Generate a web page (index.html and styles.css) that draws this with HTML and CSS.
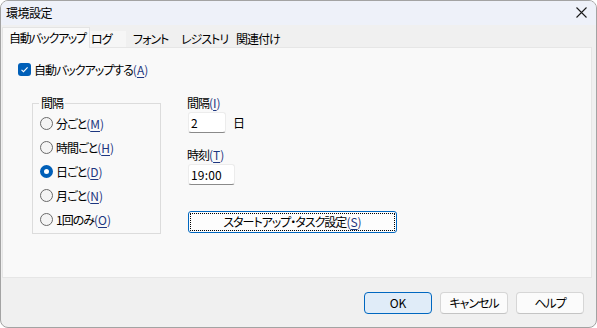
FILE: index.html
```html
<!DOCTYPE html>
<html lang="ja">
<head>
<meta charset="utf-8">
<title>環境設定</title>
<link rel="stylesheet" href="styles.css">
</head>
<body>
<div class="window">
  <div class="titlebar">
    <span class="title">環境設定</span>
    <span class="close"><svg width="11" height="11" viewBox="0 0 11 11"><path d="M0.5 0.5L10.5 10.5M10.5 0.5L0.5 10.5" stroke="#1a1a1a" stroke-width="1.1" fill="none"/></svg></span>
  </div>
  <div class="tabs">
    <div class="tab tab-1 selected">自動バックアップ</div>
    <div class="tab tab-2 hover">ログ</div>
    <div class="tab tab-3">フォント</div>
    <div class="tab tab-4">レジストリ</div>
    <div class="tab tab-5">関連付け</div>
  </div>
  <div class="panel">
    <label class="check-row">
      <span class="checkbox"><svg width="13" height="13" viewBox="0 0 13 13"><path d="M3.5 6.8L5.5 8.7L9.6 4.4" stroke="#fff" stroke-width="1.1" fill="none"/></svg></span>
      <span>自動バックアップする<span class="mn">(<u>A</u>)</span></span>
    </label>
    <div class="main">
      <fieldset class="group">
        <legend>間隔</legend>
        <div class="radio-row"><span class="radio"></span><span>分ごと<span class="mn">(<u>M</u>)</span></span></div>
        <div class="radio-row"><span class="radio"></span><span>時間ごと<span class="mn">(<u>H</u>)</span></span></div>
        <div class="radio-row"><span class="radio checked"></span><span>日ごと<span class="mn">(<u>D</u>)</span></span></div>
        <div class="radio-row"><span class="radio"></span><span>月ごと<span class="mn">(<u>N</u>)</span></span></div>
        <div class="radio-row"><span class="radio"></span><span>1回のみ<span class="mn">(<u>O</u>)</span></span></div>
      </fieldset>
      <div class="side">
        <div class="field-label">間隔<span class="mn">(<u>I</u>)</span></div>
        <div class="input-row">
          <div class="input input-short">2</div>
          <span class="unit">日</span>
        </div>
        <div class="field-label label-time">時刻<span class="mn">(<u>T</u>)</span></div>
        <div class="input input-time">19:00</div>
        <button class="task-btn">スタートアップ・タスク設定<span class="mn">(<u>S</u>)</span></button>
      </div>
    </div>
  </div>
  <div class="footer">
    <button class="btn btn-primary">OK</button>
    <button class="btn">キャンセル</button>
    <button class="btn">ヘルプ</button>
  </div>
</div>
</body>
</html>
```

FILE: styles.css
```css
* { box-sizing: border-box; }
html, body { margin: 0; padding: 0; background: #ffffff; }
body {
  font-family: "Noto Sans CJK JP", "Noto Sans", sans-serif;
  font-size: 12px;
  font-feature-settings: "palt" 1;
  letter-spacing: -1px;
  color: #000;
}
.window {
  width: 597px;
  height: 328px;
  border: 1px solid #a3a3a3;
  border-radius: 8px;
  overflow: hidden;
  background: #f0f0f0;
  display: flex;
  flex-direction: column;
}
.titlebar {
  height: 24px;
  background: #eef1f9;
  display: flex;
  align-items: center;
  justify-content: space-between;
  padding: 0 9px 0 5px;
  flex: none;
}
.title { line-height: 14px; margin-top: -1px; letter-spacing: -0.5px; }
.close { display: flex; margin-top: -2px; }
.tabs {
  height: 22px;
  display: flex;
  align-items: flex-end;
  flex: none;
  padding-left: 1px;
}
.tab {
  height: 16px;
  line-height: 15px;
  white-space: nowrap;
  flex: none;
}
.tab.selected {
  height: 21px;
  line-height: 19px;
  margin-bottom: -1px;
  background: #f9f9f9;
  border: 1px solid #e4e4e4;
  border-bottom: none;
  position: relative;
  z-index: 1;
}
.tab.hover { background: #f6f6f6; }
.tab-1 { width: 88px; padding-left: 6px; letter-spacing: -1.3px; }
.tab-2 { width: 36px; padding-left: 1px; }
.tab-3 { width: 51px; padding-left: 7px; }
.tab-4 { width: 53px; padding-left: 4px; }
.tab-5 { width: 56px; padding-left: 6px; }
.panel {
  margin: 0 4px 0 1px;
  height: 231px;
  background: #f9f9f9;
  border: 1px solid #e6e6e6;
  padding: 15px 0 0 15px;
  flex: none;
}
.check-row {
  display: flex;
  align-items: center;
  height: 13px;
  line-height: 13px;
  gap: 3px;
}
.checkbox {
  width: 13px;
  height: 13px;
  border-radius: 3px;
  background: #005fb8;
  display: flex;
}
.mn { color: #1d3680; letter-spacing: 0; }
.mn u { text-decoration-thickness: 1px; text-underline-offset: 2px; }
.main {
  display: flex;
  margin-top: 20px;
}
.group {
  margin: 0 0 0 14px;
  width: 129px;
  border: 1px solid #dcdcdc;
  padding: 1px 0 2px 6px;
  min-width: 0;
}
.group legend {
  padding: 0 2px;
  line-height: 14px;
}
.radio-row {
  height: 24px;
  display: flex;
  align-items: center;
  gap: 3px;
  padding-left: 1px;
}
.radio {
  width: 13px;
  height: 13px;
  border-radius: 50%;
  border: 1px solid #6a6a6a;
  background: #f4f4f4;
  flex: none;
}
.radio.checked {
  border: 4px solid #005fb8;
  background: #ffffff;
}
.side {
  margin-left: 26px;
  display: flex;
  flex-direction: column;
  align-items: flex-start;
}
.field-label { line-height: 14px; }
.label-time { margin-top: 15px; }
.input-row {
  display: flex;
  align-items: center;
  margin-top: 2px;
  gap: 7px;
}
.input {
  height: 21px;
  background: #ffffff;
  border: 1px solid #ececec;
  border-bottom-color: #8a8a8a;
  border-radius: 3px;
  padding-left: 2px;
  line-height: 19px;
  margin-left: 1px;
  letter-spacing: 0.2px;
}
.input-short { width: 38px; }
.input-time { width: 47px; margin-top: 2px; }
.unit { line-height: 14px; }
.task-btn {
  margin: 26px 0 0 1px;
  width: 209px;
  height: 22px;
  font: inherit;
  font-feature-settings: "palt" 1;
  letter-spacing: -1px;
  color: #000;
  background: #fdfdfd;
  border: 1px solid #0067c0;
  border-radius: 3px;
  outline: 1px dotted #000;
  outline-offset: -3px;
  padding: 0;
  line-height: 20px;
}
.footer {
  display: flex;
  justify-content: flex-end;
  gap: 8px;
  padding: 14px 12px 0 0;
}
.btn {
  width: 68px;
  height: 22px;
  font: inherit;
  font-feature-settings: "palt" 1;
  letter-spacing: -1px;
  color: #000;
  background: #fbfbfb;
  border: 1px solid #d6d6d6;
  border-bottom-color: #c4c4c4;
  border-radius: 4px;
  padding: 0;
  line-height: 20px;
}
.btn-primary {
  background: #e0ecf8;
  border: 1px solid #0067c0;
  letter-spacing: 0;
}
```
